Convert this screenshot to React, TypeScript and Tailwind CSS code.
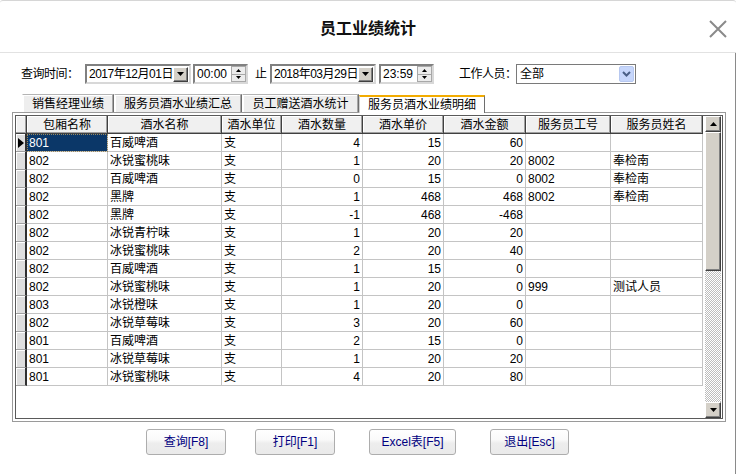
import React from "react";

type Col = { name: string; w: string; right?: boolean };

const cols: Col[] = [
  { name: "包厢名称", w: "w-[81px]" },
  { name: "酒水名称", w: "w-[114px]" },
  { name: "酒水单位", w: "w-[60px]" },
  { name: "酒水数量", w: "w-[81px]", right: true },
  { name: "酒水单价", w: "w-[81px]", right: true },
  { name: "酒水金额", w: "w-[82px]", right: true },
  { name: "服务员工号", w: "w-[85px]" },
  { name: "服务员姓名", w: "w-[92px]" },
];

const rows: string[][] = [
  ["801", "百威啤酒", "支", "4", "15", "60", "", ""],
  ["802", "冰锐蜜桃味", "支", "1", "20", "20", "8002", "奉检南"],
  ["802", "百威啤酒", "支", "0", "15", "0", "8002", "奉检南"],
  ["802", "黑牌", "支", "1", "468", "468", "8002", "奉检南"],
  ["802", "黑牌", "支", "-1", "468", "-468", "", ""],
  ["802", "冰锐青柠味", "支", "1", "20", "20", "", ""],
  ["802", "冰锐蜜桃味", "支", "2", "20", "40", "", ""],
  ["802", "百威啤酒", "支", "1", "15", "0", "", ""],
  ["802", "冰锐蜜桃味", "支", "1", "20", "0", "999", "测试人员"],
  ["803", "冰锐橙味", "支", "1", "20", "0", "", ""],
  ["802", "冰锐草莓味", "支", "3", "20", "60", "", ""],
  ["801", "百威啤酒", "支", "2", "15", "0", "", ""],
  ["801", "冰锐草莓味", "支", "1", "20", "20", "", ""],
  ["801", "冰锐蜜桃味", "支", "4", "20", "80", "", ""],
];

const raised =
  "bg-[#d4d0c8] border border-t-white border-l-white border-r-[#404040] border-b-[#404040] shadow-[inset_-1px_-1px_0_#808080]";
const sunken =
  "border-2 border-t-[#808080] border-l-[#808080] border-r-[#d8d8d8] border-b-[#d8d8d8] bg-white";
const hdr =
  "h-[18px] shrink-0 bg-[#f0f0f0] border-r border-b border-[#404040] shadow-[inset_-1px_-1px_0_#a0a0a0,inset_1px_1px_0_#ffffff] flex items-center justify-center text-[12px] leading-none text-black";

function DownTri({ w = 7, h = 4 }: { w?: number; h?: number }) {
  return (
    <svg width={w} height={h} viewBox={`0 0 ${w} ${h}`}>
      <path d={`M0 0H${w}L${w / 2} ${h}Z`} fill="#000" />
    </svg>
  );
}

function UpTri({ w = 7, h = 4 }: { w?: number; h?: number }) {
  return (
    <svg width={w} height={h} viewBox={`0 0 ${w} ${h}`}>
      <path d={`M0 ${h}H${w}L${w / 2} 0Z`} fill="#000" />
    </svg>
  );
}

function DateBox({ text }: { text: string }) {
  return (
    <div className={sunken + " flex h-[20px] w-[106px] items-center pr-[1px]"}>
      <span className="flex-1 whitespace-nowrap pl-[2px] text-[12px] leading-none tracking-[-0.5px] text-black">
        {text}
      </span>
      <div className={raised + " flex h-[15px] w-[15px] items-center justify-center"}>
        <DownTri />
      </div>
    </div>
  );
}

function TimeBox({ text }: { text: string }) {
  return (
    <div className={sunken + " flex h-[20px] w-[55px] items-center"}>
      <span className="flex-1 whitespace-nowrap pl-[2px] text-[12px] leading-none text-black">
        {text}
      </span>
      <div className="flex h-[16px] w-[15px] flex-col">
        <div className="flex flex-1 items-center justify-center border border-[#a8a8a8] bg-[#ececec]">
          <UpTri w={5} h={3} />
        </div>
        <div className="flex flex-1 items-center justify-center border border-t-0 border-[#a8a8a8] bg-[#ececec]">
          <DownTri w={5} h={3} />
        </div>
      </div>
    </div>
  );
}

export default function App() {
  return (
    <div className="flex h-[474px] w-[736px] flex-col overflow-hidden bg-white font-['Liberation_Sans','Noto_Sans_CJK_SC',sans-serif] text-black">
      {/* Title */}
      <div className="relative flex h-[53px] shrink-0 items-center justify-center rounded-t-[3px] border-t border-b border-t-[#d6d6d6] border-b-[#e2e2e2] pt-[1px]">
        <span className="font-['Noto_Sans_CJK_SC',sans-serif] text-[16px] font-bold leading-none text-[#111]">
          员工业绩统计
        </span>
        <svg
          className="absolute right-[8px] top-[18px]"
          width="20"
          height="20"
          viewBox="0 0 20 20"
        >
          <path d="M2 2L18 18M18 2L2 18" stroke="#8a8a8a" strokeWidth="2" />
        </svg>
      </div>

      {/* Body */}
      <div className="flex flex-1 flex-col border-r border-[#8a8a8a]">
        {/* Query row */}
        <div className="mt-[11px] flex h-[20px] items-center pl-[21px]">
          <span className="w-[64px] whitespace-nowrap text-[12px] leading-none tracking-[-0.5px]">
            查询时间：
          </span>
          <DateBox text="2017年12月01日" />
          <div className="ml-[2px]">
            <TimeBox text="00:00" />
          </div>
          <span className="ml-[7px] w-[15px] text-[12px] leading-none">止</span>
          <DateBox text="2018年03月29日" />
          <div className="ml-[3px]">
            <TimeBox text="23:59" />
          </div>
          <span className="ml-[25px] w-[57px] whitespace-nowrap text-[12px] leading-none tracking-[-0.5px]">
            工作人员：
          </span>
          <div className="flex h-[20px] w-[120px] items-center border border-[#7a7a7a] bg-white pr-[1px]">
            <span className="flex-1 pl-[3px] text-[12px] leading-none">全部</span>
            <div className="flex h-[16px] w-[15px] items-center justify-center rounded-[2px] border border-[#b7c8f0] bg-[#c6d6fb]">
              <svg width="9" height="6" viewBox="0 0 9 6">
                <path d="M1 1L4.5 4.5L8 1" stroke="#4a5f86" strokeWidth="2" fill="none" />
              </svg>
            </div>
          </div>
        </div>

        {/* Tabs */}
        <div className="mt-[10px] flex h-[18px] items-end pl-[22px]">
          <div className="flex h-[18px] w-[92px] items-center justify-center border-t border-l border-r border-t-[#b4b4b4] border-l-white border-r-[#6e6e6e] bg-[#eeeeee] text-[12px] leading-none shadow-[inset_-1px_0_0_#a8a8a8,inset_1px_1px_0_#ffffff]">
            销售经理业绩
          </div>
          <div className="flex h-[18px] w-[128px] items-center justify-center border-t border-l border-r border-t-[#b4b4b4] border-l-white border-r-[#6e6e6e] bg-[#eeeeee] text-[12px] leading-none shadow-[inset_-1px_0_0_#a8a8a8,inset_1px_1px_0_#ffffff]">
            服务员酒水业绩汇总
          </div>
          <div className="flex h-[18px] w-[117px] items-center justify-center border-t border-l border-r border-t-[#b4b4b4] border-l-white border-r-[#6e6e6e] bg-[#eeeeee] text-[12px] leading-none shadow-[inset_-1px_0_0_#a8a8a8,inset_1px_1px_0_#ffffff]">
            员工赠送酒水统计
          </div>
          <div className="relative z-10 -mb-[1px] flex h-[18px] w-[126px] items-center justify-center border-t-2 border-l border-r border-t-[#f2ab00] border-l-[#d0d0d0] border-r-[#6e6e6e] bg-white text-[12px] leading-none">
            服务员酒水业绩明细
          </div>
        </div>

        {/* Tab page */}
        <div className="ml-[12px] h-[310px] w-[714px] border border-[#9a9a9a] p-[2px]">
          <div className="flex h-full w-full border border-[#5a5a5a] bg-white">
            <div className="flex w-[687px] flex-col">
              <div className="flex h-[18px]">
                <div className={hdr + " w-[11px]"} />
                {cols.map((c) => (
                  <div key={c.name} className={hdr + " " + c.w}>
                    {c.name}
                  </div>
                ))}
              </div>
              {rows.map((r, i) => (
                <div key={i} className="flex h-[18px]">
                  <div className="flex h-[18px] w-[11px] shrink-0 items-center border-r-2 border-b border-r-[#303030] border-b-[#a0a0a0] bg-[#dedede] pl-[2px] shadow-[inset_1px_1px_0_#ffffff]">
                    {i === 0 && (
                      <svg width="6" height="10" viewBox="0 0 6 10">
                        <path d="M0 0L6 5L0 10Z" fill="#000" />
                      </svg>
                    )}
                  </div>
                  {r.map((v, j) => {
                    const sel = i === 0 && j === 0;
                    return (
                      <div
                        key={j}
                        className={
                          cols[j].w +
                          " flex h-[18px] shrink-0 items-center whitespace-nowrap border-r border-b border-[#c4c4c4] text-[12px] leading-none " +
                          (cols[j].right ? "justify-end pr-[2px] " : "pl-[2px] ") +
                          (sel
                            ? "bg-[#0b3768] text-white outline-1 -outline-offset-1 outline-dotted outline-[#9a8a60]"
                            : "bg-white text-black")
                        }
                      >
                        {v}
                      </div>
                    );
                  })}
                </div>
              ))}
            </div>
            {/* Scrollbar */}
            <div className="ml-[2px] flex w-[16px] flex-col">
              <div className={raised + " flex h-[16px] w-[16px] shrink-0 items-center justify-center"}>
                <UpTri />
              </div>
              <div className={raised + " h-[139px] w-[16px] shrink-0 bg-[#cfcfcf]"} />
              <div className="w-[16px] flex-1 bg-[repeating-conic-gradient(#bdbdbd_0_25%,#ffffff_0_50%)] bg-[length:2px_2px]" />
              <div className={raised + " flex h-[16px] w-[16px] shrink-0 items-center justify-center"}>
                <DownTri />
              </div>
            </div>
          </div>
        </div>

        {/* Buttons */}
        <div className="mt-[7px] flex h-[26px] pl-[146px]">
          <button className="h-[26px] w-[80px] rounded-[3px] border border-[#adadad] bg-[linear-gradient(#ffffff_0%,#fafafa_40%,#ededed_55%,#eaeaea_100%)] text-[12px] leading-none text-[#000080]">
            查询[F8]
          </button>
          <button className="ml-[29px] h-[26px] w-[80px] rounded-[3px] border border-[#adadad] bg-[linear-gradient(#ffffff_0%,#fafafa_40%,#ededed_55%,#eaeaea_100%)] text-[12px] leading-none text-[#000080]">
            打印[F1]
          </button>
          <button className="ml-[34px] h-[26px] w-[87px] rounded-[3px] border border-[#adadad] bg-[linear-gradient(#ffffff_0%,#fafafa_40%,#ededed_55%,#eaeaea_100%)] text-[12px] leading-none text-[#000080]">
            Excel表[F5]
          </button>
          <button className="ml-[34px] h-[26px] w-[79px] rounded-[3px] border border-[#adadad] bg-[linear-gradient(#ffffff_0%,#fafafa_40%,#ededed_55%,#eaeaea_100%)] text-[12px] leading-none text-[#000080]">
            退出[Esc]
          </button>
        </div>
      </div>
    </div>
  );
}
